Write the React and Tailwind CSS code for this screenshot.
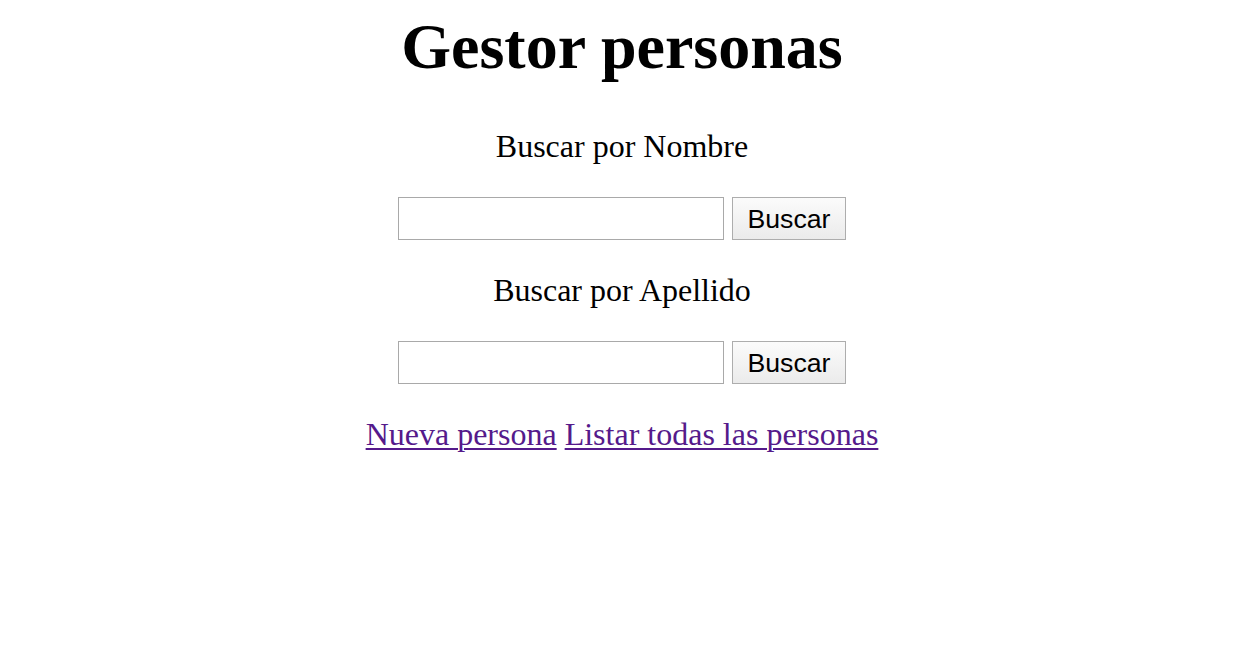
export default function App() {
  const inputCls =
    "w-[326px] h-[43px] border border-[#a9a9a9] bg-white outline-none px-1 text-[27px] font-['Liberation_Sans',Arial,sans-serif]";
  const btnCls =
    "w-[114px] h-[43px] border border-[#adadad] bg-gradient-to-b from-[#fbfbfb] to-[#ebebeb] text-black text-[26.67px] leading-none font-['Liberation_Sans',Arial,sans-serif] flex items-center justify-center pt-[2px]";
  return (
    <div className="w-[1235px] h-[668px] bg-white pl-[9px] flex flex-col items-center font-['Liberation_Serif','Times_New_Roman',serif] text-black">
      <h1 className="mt-[10px] text-[64px] leading-[74px] font-bold">Gestor personas</h1>
      <p className="mt-[44px] text-[32px] leading-[37px]">Buscar por Nombre</p>
      <div className="mt-[32px] flex gap-[8px]">
        <input type="text" className={inputCls} />
        <button className={btnCls}>Buscar</button>
      </div>
      <p className="mt-[32px] text-[32px] leading-[37px]">Buscar por Apellido</p>
      <div className="mt-[32px] flex gap-[8px]">
        <input type="text" className={inputCls} />
        <button className={btnCls}>Buscar</button>
      </div>
      <p className="mt-[32px] text-[32px] leading-[37px] text-[#551a8b]">
        <a href="#" className="underline decoration-2 underline-offset-[3px]">Nueva persona</a>{" "}
        <a href="#" className="underline decoration-2 underline-offset-[3px]">Listar todas las personas</a>
      </p>
    </div>
  );
}
